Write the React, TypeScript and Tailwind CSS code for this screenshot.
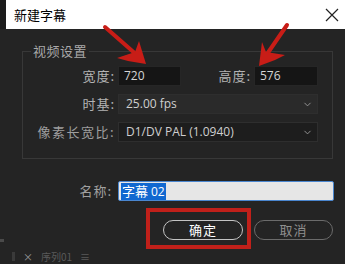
import { ChevronDown } from 'lucide-react';

const cjk = { fontFamily: '"Noto Sans CJK SC", "Noto Sans", sans-serif' };
const latin = { fontFamily: '"Open Sans", "Noto Sans CJK SC", sans-serif' };

const Arrow = ({ d, head }: { d: string; head: string }) => (
    <>
        <path d={d} stroke="#c81d17" strokeWidth="4" strokeLinecap="round" fill="none" />
        <path d={head} fill="#c81d17" />
    </>
);

const App = () => {
    return (
        <div className="relative w-[345px] h-[264px] overflow-hidden bg-[#242424] text-[13px]" style={cjk}>
            {/* Title bar */}
            <div className="flex h-[29px] bg-[#1c1c1c]">
                <div className="ml-[6px] flex flex-1 items-center justify-between bg-white pl-[8px] pr-[6px]">
                    <span className="text-[13px] text-black">新建字幕</span>
                    <svg width="14" height="14" viewBox="0 0 14 14">
                        <path d="M1 1 L13 13 M13 1 L1 13" stroke="#222" strokeWidth="1.2" />
                    </svg>
                </div>
            </div>

            {/* Video settings group */}
            <fieldset className="ml-[22px] mr-[13px] mt-[13px] border border-[#383838] pb-[16px] pr-[14px] pt-[6px]">
                <legend className="ml-[8px] px-[2px] leading-[18px] text-[#a9a9a9] tracking-[0.5px]">视频设置</legend>
                <div className="flex flex-col gap-[8px]">
                    <div className="flex h-[20px] items-center">
                        <span className="w-[95px] pr-[3px] text-right text-[#b3b3b3] tracking-[1px]">宽度:</span>
                        <div className="flex h-[20px] w-[63px] items-center border border-[#262626] bg-[#151515] pl-[5px] text-[12px] text-[#d6d6d6]" style={latin}>720</div>
                        <span className="w-[73px] pr-[3px] text-right text-[#b3b3b3] tracking-[1px]">高度:</span>
                        <div className="flex h-[20px] w-[64px] items-center border border-[#262626] bg-[#151515] pl-[5px] text-[12px] text-[#d6d6d6]" style={latin}>576</div>
                    </div>
                    <div className="flex h-[20px] items-center">
                        <span className="w-[95px] pr-[3px] text-right text-[#b3b3b3] tracking-[1px]">时基:</span>
                        <div className="flex h-[20px] w-[200px] items-center justify-between border border-[#2e2e2e] bg-[#2a2a2a] pl-[7px] pr-[4px] text-[12px] text-[#cfcfcf]" style={latin}>
                            <span>25.00 fps</span>
                            <ChevronDown size={11} color="#9a9a9a" strokeWidth={2} />
                        </div>
                    </div>
                    <div className="flex h-[20px] items-center">
                        <span className="w-[95px] pr-[3px] text-right text-[#9e9e9e] tracking-[1.5px]">像素长宽比:</span>
                        <div className="flex h-[20px] w-[200px] items-center justify-between border border-[#2e2e2e] bg-[#1d1d1d] pl-[7px] pr-[4px] text-[12px] text-[#cfcfcf]" style={latin}>
                            <span>D1/DV PAL (1.0940)</span>
                            <ChevronDown size={11} color="#9a9a9a" strokeWidth={2} />
                        </div>
                    </div>
                </div>
            </fieldset>

            {/* Name */}
            <div className="mt-[22px] flex h-[20px] items-center">
                <span className="w-[115px] pr-[3px] text-right text-[#a0a0a0] tracking-[1px]">名称:</span>
                <div className="ml-[3px] flex h-[20px] w-[216px] items-center rounded-[2px] border border-[#4a86cf] bg-[#e6e6e6] pl-[2px]">
                    <span className="bg-[#1168d0] px-[1px] text-[13px] leading-[16px] text-white">
                        字幕 <span style={latin} className="text-[12px]">02</span>
                    </span>
                </div>
            </div>

            {/* Buttons */}
            <div className="mt-[19px] flex justify-end gap-[11px] pr-[12px]">
                <button className="flex h-[20px] w-[80px] items-center justify-center rounded-full border border-[#c4c4c4] text-[13px] text-white tracking-[1px]">确定</button>
                <button className="flex h-[20px] w-[79px] items-center justify-center rounded-full border border-[#6b6b6b] text-[13px] text-[#8f8f8f] tracking-[1px]">取消</button>
            </div>

            {/* Panel behind dialog */}
            <div className="mt-[10px] flex h-[13px] items-center gap-[8px] pl-[12px] text-[10px] leading-[13px] text-[#5a5a5a]">
                <span className="h-[9px] w-[3px] bg-[#3a3a3a]" />
                <span className="text-[#9a9a9a]">×</span>
                <span>序列01</span>
                <span>≡</span>
            </div>
            <span className="absolute left-0 top-[239px] h-[3px] w-[4px] bg-[#4a4a4a]" />

            {/* Annotations */}
            <div className="absolute left-[146px] top-[208px] h-[41px] w-[105px] border-[4px] border-[#c0201a]" />
            <svg className="absolute left-0 top-0" width="345" height="264" viewBox="0 0 345 264">
                <Arrow d="M105 27 L138 56" head="M146 64 L139 41 L135 52 L117 58 L128 61 Z" />
                <Arrow d="M287 25 L265 57" head="M259 66 L262 42 L266 52 L285 55 L275 60 Z" />
            </svg>
        </div>
    );
};

export default App;
